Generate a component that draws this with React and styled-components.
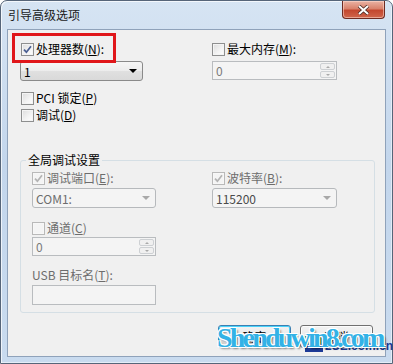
import React from 'react';
import styled, { createGlobalStyle } from 'styled-components';

const GlobalStyle = createGlobalStyle`
  html, body {
    margin: 0;
    padding: 0;
    background: #ffffff;
  }
  body {
    font-family: "Noto Sans CJK SC", "Liberation Sans", sans-serif;
    font-size: 12px;
  }
`;

const Window = styled.div`
  width: 393px;
  height: 364px;
  box-sizing: border-box;
  display: flex;
  flex-direction: column;
  padding: 0 6px 6px 6px;
  border: 1px solid #566579;
  border-radius: 7px 7px 0 0;
  background: linear-gradient(180deg, #d6e4f3 0%, #c3d6ec 45%, #c9dbef 100%);
  box-shadow: inset 1px 1px 0 rgba(255, 255, 255, 0.7), inset -1px -1px 0 rgba(255, 255, 255, 0.5);
`;

const TitleBar = styled.div`
  height: 28px;
  flex: none;
  display: flex;
  justify-content: space-between;
  align-items: flex-start;
  padding-left: 1px;
`;

const Title = styled.span`
  margin-top: 7px;
  font-size: 12px;
  line-height: 14px;
  color: #1a1a1a;
`;

const CloseButton = styled.div`
  width: 43px;
  height: 18px;
  margin-right: 1px;
  box-sizing: border-box;
  border: 1px solid #6e2b22;
  border-top: none;
  border-radius: 0 0 4px 4px;
  background: linear-gradient(180deg, #eab3a4 0%, #d9826c 45%, #c3472f 55%, #d0664c 100%);
  box-shadow: inset 0 0 0 1px rgba(255, 220, 210, 0.55);
  display: flex;
  align-items: center;
  justify-content: center;
`;

const Client = styled.div`
  flex: 1;
  position: relative;
  display: flex;
  flex-direction: column;
  background: #f0f0f0;
  border: 1px solid #8fa2ba;
`;

const TopGrid = styled.div`
  margin-top: 12px;
  padding-left: 12px;
  display: grid;
  grid-template-columns: 192px 1fr;
`;

const Column = styled.div`
  display: flex;
  flex-direction: column;
  align-items: flex-start;
`;

const CheckRow = styled.div`
  display: flex;
  align-items: center;
  height: 14px;
  gap: 2px;
  margin-top: ${(p) => p.$mt || 0}px;
  margin-left: ${(p) => p.$ml || 0}px;
`;

const Box = styled.span`
  width: 13px;
  height: 13px;
  box-sizing: border-box;
  flex: none;
  border: 1px solid ${(p) => (p.$disabled ? '#b9b9b9' : '#8e8f8f')};
  background: ${(p) =>
    p.$disabled
      ? '#f4f4f4'
      : 'linear-gradient(135deg, #dcdcdc 0%, #f4f4f4 60%, #ffffff 100%)'};
  box-shadow: inset 0 0 0 1px ${(p) => (p.$disabled ? '#f7f7f7' : '#f4f4f4')};
  display: flex;
  align-items: center;
  justify-content: center;
`;

const Label = styled.span`
  font-size: 12px;
  line-height: 14px;
  white-space: pre;
  color: ${(p) => (p.$disabled ? '#6d6d6d' : '#000000')};
  margin-top: ${(p) => p.$mt || 0}px;

  u {
    text-decoration: underline;
    text-underline-offset: 1px;
  }
`;

const Combo = styled.div`
  width: ${(p) => p.$w}px;
  height: 20px;
  margin-top: ${(p) => p.$mt || 0}px;
  box-sizing: border-box;
  border: 1px solid ${(p) => (p.$disabled ? '#b6b9bc' : '#8a8a8a')};
  border-radius: 3px;
  background: ${(p) =>
    p.$disabled
      ? '#f4f4f4'
      : 'linear-gradient(180deg, #f6f6f6 0%, #ececec 50%, #e0e0e0 51%, #d9d9d9 100%)'};
  display: flex;
  align-items: center;
  justify-content: space-between;
  padding: 0 5px 0 3px;
  font-size: 12px;
  color: ${(p) => p.$color || '#000000'};
`;

const Arrow = styled.span`
  width: 0;
  height: 0;
  border-left: 4px solid transparent;
  border-right: 4px solid transparent;
  border-top: 4px solid ${(p) => (p.$disabled ? '#a8a8a8' : '#000000')};
`;

const Spin = styled.div`
  width: ${(p) => p.$w}px;
  height: 19px;
  margin-top: ${(p) => p.$mt || 0}px;
  box-sizing: border-box;
  border: 1px solid #b9bcbf;
  background: #f4f4f4;
  display: flex;
  align-items: stretch;
  font-size: 12px;
  color: #7a7a7a;
`;

const SpinValue = styled.span`
  flex: 1;
  padding-left: 3px;
  line-height: 17px;
`;

const SpinButtons = styled.div`
  width: 15px;
  display: flex;
  flex-direction: column;
  gap: 1px;
  padding: 1px 1px 1px 0;
`;

const SpinButton = styled.div`
  flex: 1;
  border: 1px solid #cdd0d3;
  border-radius: 2px;
  background: #f0f0f0;
  display: flex;
  align-items: center;
  justify-content: center;
`;

const TinyArrow = styled.span`
  width: 0;
  height: 0;
  border-left: 2px solid transparent;
  border-right: 2px solid transparent;
  ${(p) => (p.$up ? 'border-bottom: 2px solid #a9a9a9;' : 'border-top: 2px solid #a9a9a9;')}
`;

const TextBox = styled.div`
  width: 124px;
  height: 20px;
  margin-top: ${(p) => p.$mt || 0}px;
  box-sizing: border-box;
  border: 1px solid #b9bcbf;
  background: #f4f4f4;
`;

const Group = styled.fieldset`
  margin: 31px 10px 0 12px;
  padding: 4px 0 7px 11px;
  border: 1px solid #d5dfe5;
  border-radius: 3px;
  min-width: 0;
`;

const Legend = styled.legend`
  font-size: 12px;
  line-height: 14px;
  padding: 0 2px;
  margin-left: -6px;
  color: #000000;
`;

const GroupGrid = styled.div`
  display: grid;
  grid-template-columns: 180px 1fr;
`;

const Footer = styled.div`
  margin-top: 12px;
  padding-right: 12px;
  display: flex;
  justify-content: flex-end;
  gap: 9px;
`;

const Button = styled.div`
  width: 73px;
  height: 23px;
  box-sizing: border-box;
  border: 1px solid ${(p) => (p.$default ? '#3c7fb1' : '#707070')};
  border-radius: 3px;
  background: linear-gradient(180deg, #f2f2f2 0%, #ebebeb 49%, #dddddd 50%, #cfcfcf 100%);
  box-shadow: inset 0 0 0 1px ${(p) => (p.$default ? '#48d3fb' : '#fcfcfc')};
  display: flex;
  align-items: center;
  justify-content: center;
  font-size: 12px;
  color: #000000;
`;

const Highlight = styled.div`
  position: absolute;
  left: 4px;
  top: 3px;
  width: 104px;
  height: 30px;
  box-sizing: border-box;
  border: 3px solid #e0161a;
  z-index: 2;
`;

const Watermark = styled.div`
  position: absolute;
  left: 209px;
  top: 294px;
  z-index: 3;
  font-family: "Liberation Serif", serif;
  font-weight: bold;
  font-size: 28px;
  line-height: 28px;
  letter-spacing: -2.8px;
  color: #33b2e6;
  text-shadow: 1px 1px 0 #ffffff, -1px -1px 0 #ffffff, 1px -1px 0 #ffffff, -1px 1px 0 #ffffff,
    2px 2px 2px rgba(0, 0, 0, 0.45);
`;

const SiteMark = styled.div`
  position: absolute;
  left: 297px;
  top: 306px;
  z-index: 2;
  display: flex;
  align-items: flex-end;
  gap: 2px;
  font-family: "Liberation Sans", sans-serif;
  font-weight: bold;
  font-size: 12px;
  line-height: 12px;
  color: #1d3a97;
`;

const Tick = ({ disabled }) => (
  <svg width="9" height="9" viewBox="0 0 9 9">
    <path
      d="M1 4.6 L3.4 7.2 L8 1.2"
      fill="none"
      stroke={disabled ? '#b3b3b3' : '#4a5f92'}
      strokeWidth="1.7"
    />
  </svg>
);

const Check = ({ checked, disabled, children, mt, ml }) => (
  <CheckRow $mt={mt} $ml={ml}>
    <Box $disabled={disabled}>{checked && <Tick disabled={disabled} />}</Box>
    <Label $disabled={disabled}>{children}</Label>
  </CheckRow>
);

const SpinBox = ({ value, w, mt }) => (
  <Spin $w={w} $mt={mt}>
    <SpinValue>{value}</SpinValue>
    <SpinButtons>
      <SpinButton>
        <TinyArrow $up />
      </SpinButton>
      <SpinButton>
        <TinyArrow />
      </SpinButton>
    </SpinButtons>
  </Spin>
);

export default function App() {
  return (
    <>
      <GlobalStyle />
      <Window>
        <TitleBar>
          <Title>引导高级选项</Title>
          <CloseButton>
            <svg width="13" height="10" viewBox="0 0 13 10">
              <path d="M2 1 L11 9 M11 1 L2 9" stroke="#4a2a24" strokeWidth="3.6" />
              <path d="M2 1 L11 9 M11 1 L2 9" stroke="#ffffff" strokeWidth="2" />
            </svg>
          </CloseButton>
        </TitleBar>
        <Client>
          <Highlight />
          <TopGrid>
            <Column>
              <Check checked ml={1}>
                处理器数(<u>N</u>):
              </Check>
              <Combo $w={123} $mt={5}>
                <span>1</span>
                <Arrow />
              </Combo>
              <Check mt={10} ml={1}>
                PCI 锁定(<u>P</u>)
              </Check>
              <Check mt={3} ml={1}>
                调试(<u>D</u>)
              </Check>
            </Column>
            <Column>
              <Check>
                最大内存(<u>M</u>):
              </Check>
              <SpinBox value="0" w={125} mt={5} />
            </Column>
          </TopGrid>

          <Group>
            <Legend>全局调试设置</Legend>
            <GroupGrid>
              <Column>
                <Check checked disabled>
                  调试端口(<u>E</u>):
                </Check>
                <Combo $w={124} $mt={3} $disabled $color="#6d6d6d">
                  <span>COM1:</span>
                  <Arrow $disabled />
                </Combo>
                <Check disabled mt={13}>
                  通道(<u>C</u>)
                </Check>
                <SpinBox value="0" w={124} mt={2} />
                <Label $disabled $mt={12}>
                  USB 目标名(<u>T</u>):
                </Label>
                <TextBox $mt={3} />
              </Column>
              <Column>
                <Check checked disabled>
                  波特率(<u>B</u>):
                </Check>
                <Combo $w={125} $mt={3} $disabled $color="#4a4a4a">
                  <span>115200</span>
                  <Arrow $disabled />
                </Combo>
              </Column>
            </GroupGrid>
          </Group>

          <Footer>
            <Button $default>确定</Button>
            <Button>取消</Button>
          </Footer>

          <SiteMark>
            <svg width="18" height="16" viewBox="0 0 18 16">
              <rect x="0" y="0" width="18" height="8" fill="#3a9a3c" />
              <rect x="0" y="8" width="18" height="8" fill="#1d3a97" />
              <circle cx="10" cy="6" r="4" fill="#e8e04a" opacity="0.8" />
            </svg>
            <span>2SE.com.cn</span>
          </SiteMark>
          <Watermark>Shenduwin8.com</Watermark>
        </Client>
      </Window>
    </>
  );
}
